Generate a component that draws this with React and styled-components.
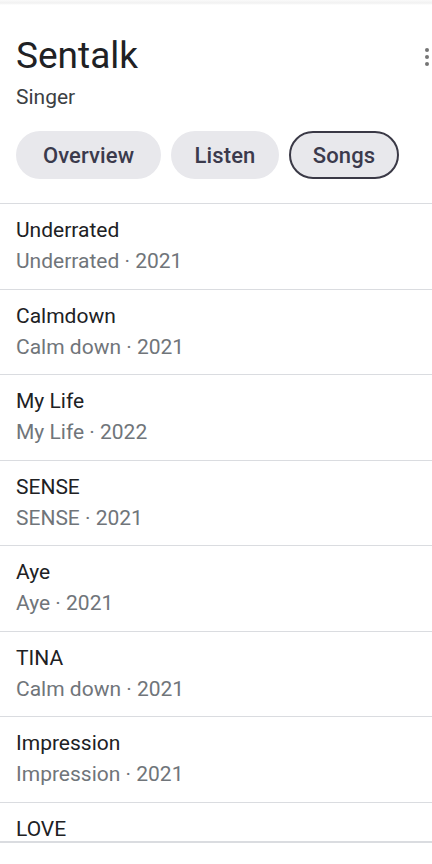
import React from "react";
import styled, { createGlobalStyle } from "styled-components";

const Global = createGlobalStyle`
  html, body { margin: 0; padding: 0; background: #fff; }
  body { font-family: Roboto, "Noto Sans", Arial, sans-serif; }
`;

const Page = styled.div`
  width: 432px;
  height: 864px;
  background: #fff;
  display: flex;
  flex-direction: column;
  overflow: hidden;
`;

const TopShade = styled.div`
  height: 5px;
  flex: none;
  background: linear-gradient(#fafafa, #f1f1f1 60%, #fff);
`;

const Card = styled.div`
  height: 836px;
  flex: none;
  overflow: hidden;
  border-bottom: 2px solid #dadce0;
  display: flex;
  flex-direction: column;
`;

const Header = styled.div`
  position: relative;
  padding: 29px 16px 0 16px;
`;

const Title = styled.h1`
  margin: 0;
  font-family: Roboto, sans-serif;
  font-weight: 400;
  font-size: 37px;
  line-height: 44px;
  color: #202124;
`;

const Subtitle = styled.div`
  margin-top: 7px;
  font-size: 21px;
  line-height: 24px;
  color: #3c4043;
`;

const Kebab = styled.button`
  position: absolute;
  right: -7px;
  top: 40px;
  width: 24px;
  height: 24px;
  padding: 0;
  border: 0;
  background: none;
  display: flex;
  align-items: center;
  justify-content: center;
`;

const Chips = styled.div`
  display: flex;
  gap: 10px;
  padding: 22px 16px 24px 16px;
`;

const Chip = styled.button`
  box-sizing: border-box;
  width: ${(p) => p.$w}px;
  height: 48px;
  padding: 0;
  border-radius: 24px;
  border: ${(p) => (p.$active ? "2px solid #3a3946" : "1px solid transparent")};
  background: #e8e8ec;
  color: #3b3a4c;
  font-family: Roboto, sans-serif;
  font-weight: 500;
  font-size: 22px;
  letter-spacing: 0.1px;
  display: flex;
  align-items: center;
  justify-content: center;
`;

const List = styled.div`
  border-top: 1px solid #dadce0;
`;

const Row = styled.div`
  box-sizing: border-box;
  height: 85.5px;
  padding: 13px 16px 0 16px;
  border-bottom: 1.5px solid #dadce0;
`;

const SongTitle = styled.div`
  font-size: 21px;
  line-height: 26px;
  color: #202124;
`;

const SongMeta = styled.div`
  margin-top: 5px;
  font-size: 21px;
  line-height: 26px;
  color: #70757a;
`;

const tabs = [
  ["Overview", 145, false],
  ["Listen", 108, false],
  ["Songs", 110, true],
];

const songs = [
  ["Underrated", "Underrated · 2021"],
  ["Calmdown", "Calm down · 2021"],
  ["My Life", "My Life · 2022"],
  ["SENSE", "SENSE · 2021"],
  ["Aye", "Aye · 2021"],
  ["TINA", "Calm down · 2021"],
  ["Impression", "Impression · 2021"],
  ["LOVE", null],
];

export default function App() {
  return (
    <Page>
      <Global />
      <TopShade />
      <Card>
        <Header>
          <Title>Sentalk</Title>
          <Subtitle>Singer</Subtitle>
          <Kebab aria-label="More options">
            <svg width="24" height="24" viewBox="0 0 24 24">
              <circle cx="12" cy="5" r="2" fill="#757575" />
              <circle cx="12" cy="12" r="2" fill="#757575" />
              <circle cx="12" cy="19" r="2" fill="#757575" />
            </svg>
          </Kebab>
        </Header>
        <Chips>
          {tabs.map(([label, w, active]) => (
            <Chip key={label} $w={w} $active={active}>
              {label}
            </Chip>
          ))}
        </Chips>
        <List>
          {songs.map(([t, m]) => (
            <Row key={t}>
              <SongTitle>{t}</SongTitle>
              {m && <SongMeta>{m}</SongMeta>}
            </Row>
          ))}
        </List>
      </Card>
    </Page>
  );
}
